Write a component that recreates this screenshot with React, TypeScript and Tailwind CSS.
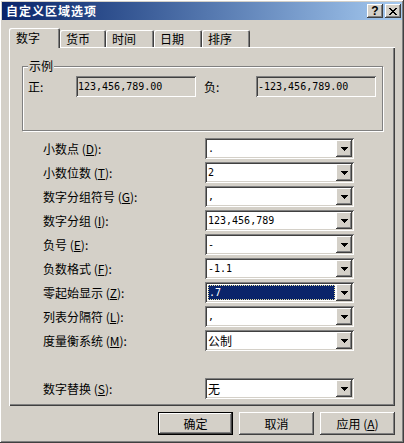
import React from "react";

const sunken =
  "shadow-[inset_1px_1px_#808080,inset_-1px_-1px_#ffffff,inset_2px_2px_#404040,inset_-2px_-2px_#d4d0c8]";
const raisedCap =
  "shadow-[inset_-1px_-1px_#404040,inset_1px_1px_#ffffff,inset_-2px_-2px_#808080,inset_2px_2px_#d4d0c8]";

function Arrow() {
  return (
    <svg width="7" height="4" viewBox="0 0 7 4" shapeRendering="crispEdges">
      <path d="M0 0h7v1H0zM1 1h5v1H1zM2 2h3v1H2zM3 3h1v1H3z" fill="#000" />
    </svg>
  );
}

const isAscii = (s: string) => /^[\x00-\x7f]*$/.test(s);

function Value({ v }: { v: string }) {
  return isAscii(v) ? (
    <span className="font-['DejaVu_Sans_Mono',monospace] text-[10px]">{v}</span>
  ) : (
    <span>{v}</span>
  );
}

function Combo({ value, selected }: { value: string; selected?: boolean }) {
  return (
    <div className={`w-[149px] h-[21px] bg-white p-[2px] flex ${sunken}`}>
      <div className="flex-1 flex items-center">
        {selected ? (
          <div className="h-[15px] w-full mx-[1px] bg-[#0a246a] text-white flex items-center pl-[1px] outline outline-1 outline-dotted outline-[#e8e0a0] -outline-offset-1">
            <Value v={value} />
          </div>
        ) : (
          <span className="pl-[1px] flex items-center">
            <Value v={value} />
          </span>
        )}
      </div>
      <div
        className={`w-[16px] h-[17px] bg-[#d4d0c8] flex items-center justify-center ${raisedCap}`}
      >
        <Arrow />
      </div>
    </div>
  );
}

function Label({ name, k }: { name: string; k: string }) {
  return (
    <span>
      {name} (<span className="underline underline-offset-1">{k}</span>):
    </span>
  );
}

const rows: { name: string; k: string; value: string; selected?: boolean }[] = [
  { name: "小数点", k: "D", value: "." },
  { name: "小数位数", k: "T", value: "2" },
  { name: "数字分组符号", k: "G", value: "," },
  { name: "数字分组", k: "I", value: "123,456,789" },
  { name: "负号", k: "E", value: "-" },
  { name: "负数格式", k: "F", value: "-1.1" },
  { name: "零起始显示", k: "Z", value: ".7", selected: true },
  { name: "列表分隔符", k: "L", value: "," },
  { name: "度量衡系统", k: "M", value: "公制" },
];

const tabs = ["货币", "时间", "日期", "排序"];
const tabWidths = ["w-[46px]", "w-[48px]", "w-[48px]", "w-[48px]"];

export default function App() {
  return (
    <div
      className={`w-[404px] h-[443px] bg-[#d4d0c8] p-[2px] flex flex-col text-[12px] leading-none text-black font-['Noto_Sans_CJK_SC',sans-serif] ${raisedCap}`}
    >
      {/* Title bar */}
      <div className="h-[18px] flex items-center pl-[4px] pr-[1px] bg-gradient-to-r from-[#0a246a] to-[#a6caf0]">
        <span className="text-white font-bold tracking-[1px]">自定义区域选项</span>
        <div className="ml-auto flex gap-[2px]">
          <div
            className={`w-[16px] h-[14px] bg-[#d4d0c8] flex items-center justify-center font-bold text-[12px] font-['Liberation_Sans',sans-serif] ${raisedCap}`}
          >
            ?
          </div>
          <div
            className={`w-[16px] h-[14px] bg-[#d4d0c8] flex items-center justify-center ${raisedCap}`}
          >
            <svg width="8" height="7" viewBox="0 0 8 7" shapeRendering="crispEdges">
              <path
                d="M0 0h2v1H0zM6 0h2v1H6zM1 1h2v1H1zM5 1h2v1H5zM2 2h4v1H2zM3 3h2v1H3zM2 4h4v1H2zM1 5h2v1H1zM5 5h2v1H5zM0 6h2v1H0zM6 6h2v1H6z"
                fill="#000"
              />
            </svg>
          </div>
        </div>
      </div>

      {/* Tabs */}
      <div className="ml-[7px] mt-[8px] h-[19px] flex items-end">
        <div className="relative z-10 w-[51px] h-[20px] -mb-[1px] bg-[#d4d0c8] rounded-t-[2px] flex items-center pl-[7px] shadow-[inset_1px_1px_#ffffff,inset_-1px_0_#404040,inset_-2px_0_#808080]">
          数字
        </div>
        {tabs.map((t, i) => (
          <div
            key={t}
            className={`${tabWidths[i]} h-[17px] bg-[#d4d0c8] rounded-t-[2px] flex items-center pl-[6px] pt-[1px] shadow-[inset_1px_1px_#ffffff,inset_-1px_0_#404040,inset_-2px_0_#808080]`}
          >
            {t}
          </div>
        ))}
      </div>

      {/* Panel */}
      <div className="ml-[7px] w-[386px] h-[359px] flex flex-col shadow-[inset_1px_1px_#ffffff,inset_-1px_-1px_#404040,inset_-2px_-2px_#808080]">
        {/* Group box */}
        <div className="relative ml-[13px] mt-[19px] w-[361px] h-[65px] border border-[#808080] shadow-[inset_1px_1px_#ffffff,1px_1px_#ffffff]">
          <span className="absolute left-[5px] -top-[7px] px-[1px] bg-[#d4d0c8]">示例</span>
          <div className="flex items-center pt-[9px] pl-[5px]">
            <span className="w-[48px]">正:</span>
            <div className={`w-[120px] h-[21px] flex items-center pl-[2px] ${sunken}`}>
              <Value v="123,456,789.00" />
            </div>
            <span className="ml-[8px] w-[52px]">负:</span>
            <div className={`w-[120px] h-[21px] flex items-center pl-[2px] ${sunken}`}>
              <Value v="-123,456,789.00" />
            </div>
          </div>
        </div>

        {/* Form rows */}
        <div className="mt-[7px] flex flex-col gap-[3px]">
          {rows.map((r) => (
            <div key={r.name} className="flex items-center pl-[34px]">
              <div className="w-[162px]">
                <Label name={r.name} k={r.k} />
              </div>
              <Combo value={r.value} selected={r.selected} />
            </div>
          ))}
        </div>

        <div className="mt-[27px] flex items-center pl-[34px]">
          <div className="w-[162px]">
            <Label name="数字替换" k="S" />
          </div>
          <Combo value="无" />
        </div>
      </div>

      {/* Buttons */}
      <div className="ml-[7px] w-[386px] mt-[6px] flex justify-end gap-[6px]">
        <div className="w-[75px] h-[23px] border border-black bg-[#d4d0c8] flex items-center justify-center shadow-[inset_-1px_-1px_#404040,inset_1px_1px_#ffffff,inset_-2px_-2px_#808080]">
          确定
        </div>
        <div className={`w-[75px] h-[23px] bg-[#d4d0c8] flex items-center justify-center ${raisedCap}`}>
          取消
        </div>
        <div className={`w-[75px] h-[23px] bg-[#d4d0c8] flex items-center justify-center ${raisedCap}`}>
          <span>
            应用 (<span className="underline underline-offset-1">A</span>)
          </span>
        </div>
      </div>
    </div>
  );
}
